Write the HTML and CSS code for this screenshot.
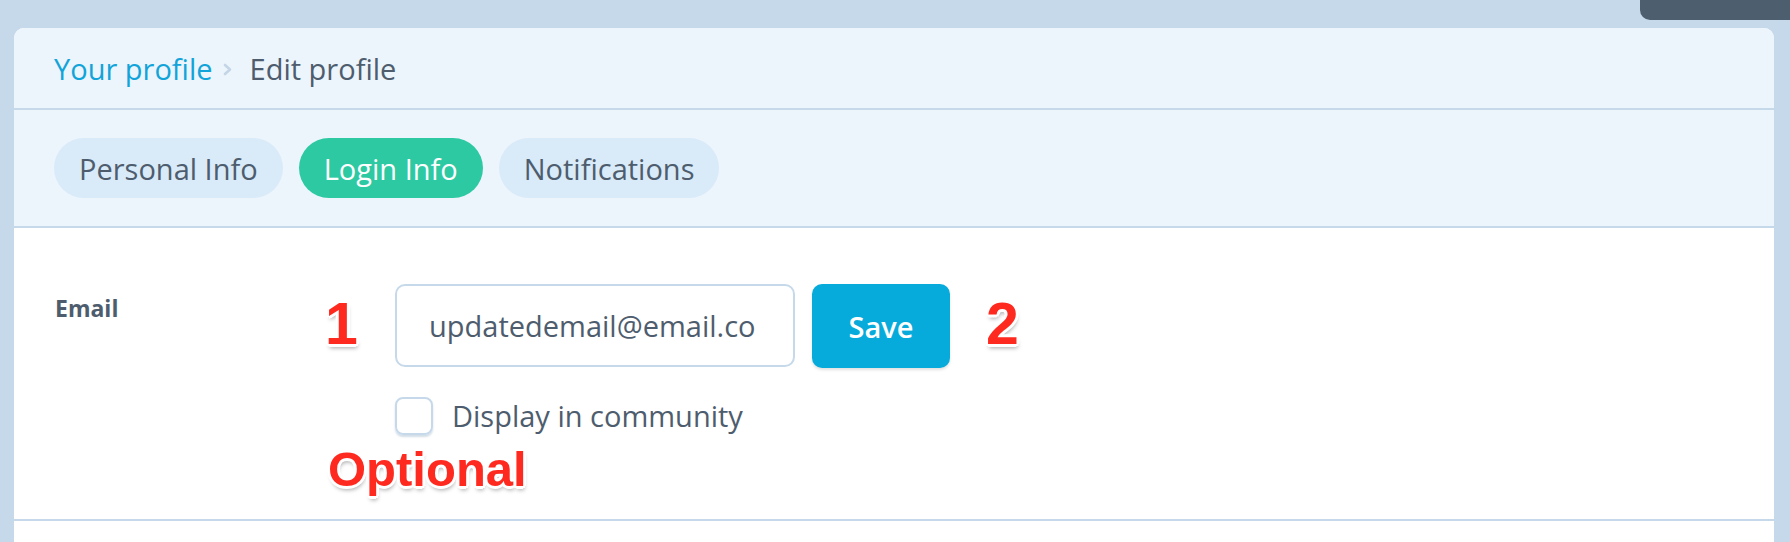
FILE: index.html
```html
<!DOCTYPE html>
<html lang="en">
<head>
    <meta charset="UTF-8">
    <title>Edit profile</title>
    <link rel="stylesheet" href="styles.css">
</head>
<body>

<div class="topbar">
    <div class="account-menu"></div>
</div>

<main class="card">
    <nav class="breadcrumb">
        <a href="#" class="crumb-link">Your profile</a>
        <svg class="crumb-sep" width="9" height="13" viewBox="0 0 9 13"><polyline points="2,2 7,6.5 2,11" fill="none" stroke="#c4d6e6" stroke-width="2.6" stroke-linecap="round" stroke-linejoin="round"/></svg>
        <span class="crumb-current">Edit profile</span>
    </nav>

    <div class="tabs">
        <button class="tab">Personal Info</button>
        <button class="tab active">Login Info</button>
        <button class="tab">Notifications</button>
    </div>

    <section class="field-row">
        <div class="field-label">Email</div>
        <div class="field-control">
            <div class="input-row">
                <input class="text-input" type="text" value="updatedemail@email.co">
                <button class="btn-save">Save</button>
            </div>
            <label class="checkbox-row">
                <span class="checkbox"></span>
                Display in community
            </label>

            <!-- annotations -->
            <span class="note note-one">1</span>
            <span class="note note-two">2</span>
            <span class="note note-optional">Optional</span>
        </div>
    </section>
</main>

</body>
</html>
```

FILE: styles.css
```css
body {
    margin: 0;
    height: 542px;
    overflow: hidden;
    background-color: #c6d9ea;
    font-family: "Open Sans", Arial, sans-serif;
    color: #4e5d6d;
}
.topbar {
    display: flex;
    justify-content: flex-end;
    height: 20px;
}
.account-menu {
    width: 150px;
    height: 20px;
    background-color: #4d5e6f;
    border-bottom-left-radius: 10px;
}
.card {
    margin: 8px 16px 0 14px;
    height: 514px;
    background-color: #ffffff;
    border-radius: 10px 10px 0 0;
    overflow: hidden;
}
.breadcrumb {
    display: flex;
    align-items: center;
    height: 80px;
    padding-left: 40px;
    background-color: #ecf4fc;
    border-bottom: 2px solid #c6d9ea;
    font-size: 29px;
}
.crumb-link {
    color: #12a4d9;
    text-decoration: none;
}
.crumb-sep {
    margin: 3px 18px 0 10px;
}
.crumb-current {
    color: #4e5d6d;
}
.tabs {
    display: flex;
    gap: 16px;
    padding: 28px 40px;
    background-color: #ecf4fc;
    border-bottom: 2px solid #c6d9ea;
}
.tab {
    height: 60px;
    padding: 0 25px;
    border: none;
    border-radius: 30px;
    background-color: #d9eaf9;
    color: #4e5d6d;
    font-family: inherit;
    font-size: 29px;
}
.tab.active {
    background-color: #2dc9a2;
    color: #ffffff;
}
.field-row {
    display: flex;
    padding: 56px 0 84px 41px;
    border-bottom: 2px solid #c6d9ea;
}
.field-label {
    width: 340px;
    padding-top: 8px;
    font-size: 23px;
    font-weight: 700;
}
.field-control {
    position: relative;
}
.input-row {
    display: flex;
    gap: 17px;
}
.text-input {
    box-sizing: border-box;
    width: 400px;
    height: 83px;
    padding: 0 32px;
    border: 2px solid #c6d9ea;
    border-radius: 10px;
    color: #4e5d6d;
    font-family: inherit;
    font-size: 29px;
    outline: none;
}
.btn-save {
    width: 138px;
    height: 84px;
    border: none;
    border-radius: 10px;
    background-color: #07abdb;
    color: #ffffff;
    font-family: inherit;
    font-size: 29px;
    font-weight: 600;
    box-shadow: 0 2px 3px rgba(0, 0, 0, 0.12);
}
.checkbox-row {
    display: flex;
    align-items: center;
    gap: 19px;
    margin-top: 28px;
    font-size: 29px;
}
.checkbox {
    box-sizing: border-box;
    width: 38px;
    height: 38px;
    border: 2px solid #c6d9ea;
    border-radius: 8px;
    box-shadow: 0 2px 2px rgba(80, 120, 160, 0.25);
}
.note {
    position: absolute;
    font-family: "Liberation Sans", Arial, sans-serif;
    font-weight: 700;
    color: #ff2a1f;
    line-height: 1;
    text-shadow:
        -3px 0 0 #fff, 3px 0 0 #fff, 0 -3px 0 #fff, 0 3px 0 #fff,
        -2px -2px 0 #fff, 2px -2px 0 #fff, -2px 2px 0 #fff, 2px 2px 0 #fff,
        1px 4px 4px rgba(0, 0, 0, 0.35);
}
.note-one {
    left: -70px;
    top: 11px;
    font-size: 59px;
}
.note-two {
    left: 591px;
    top: 11px;
    font-size: 59px;
}
.note-optional {
    left: -67px;
    top: 161px;
    font-size: 49px;
}
```
